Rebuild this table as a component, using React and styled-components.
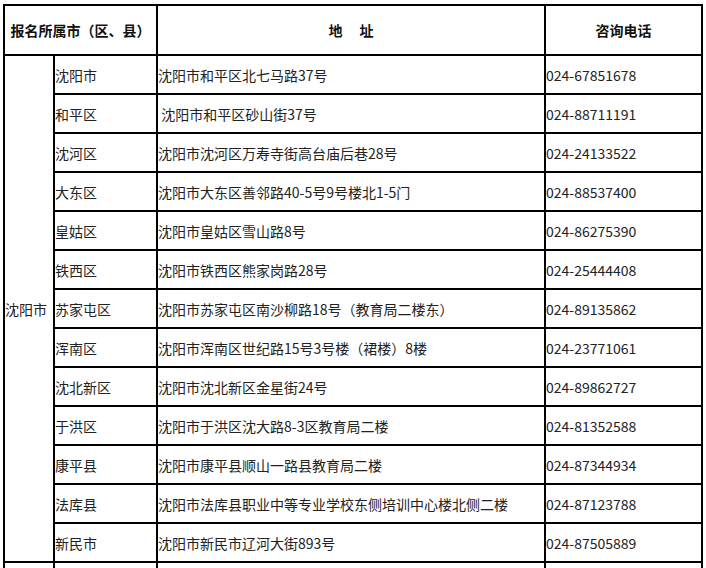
import React from 'react';
import styled, { createGlobalStyle } from 'styled-components';

const GlobalStyle = createGlobalStyle`
  html, body {
    margin: 0;
    padding: 0;
    background: #fff;
    overflow: hidden;
  }
  body {
    font-family: "Noto Sans CJK SC", "Noto Sans", sans-serif;
    color: #222;
  }
`;

const districts = [
  { name: '沈阳市', address: '沈阳市和平区北七马路37号', phone: '024-67851678' },
  { name: '和平区', address: '\u00a0沈阳市和平区砂山街37号', phone: '024-88711191' },
  { name: '沈河区', address: '沈阳市沈河区万寿寺街高台庙后巷28号', phone: '024-24133522' },
  { name: '大东区', address: '沈阳市大东区善邻路40-5号9号楼北1-5门', phone: '024-88537400' },
  { name: '皇姑区', address: '沈阳市皇姑区雪山路8号', phone: '024-86275390' },
  { name: '铁西区', address: '沈阳市铁西区熊家岗路28号', phone: '024-25444408' },
  { name: '苏家屯区', address: '沈阳市苏家屯区南沙柳路18号（教育局二楼东）', phone: '024-89135862' },
  { name: '浑南区', address: '沈阳市浑南区世纪路15号3号楼（裙楼）8楼', phone: '024-23771061' },
  { name: '沈北新区', address: '沈阳市沈北新区金星街24号', phone: '024-89862727' },
  { name: '于洪区', address: '沈阳市于洪区沈大路8-3区教育局二楼', phone: '024-81352588' },
  { name: '康平县', address: '沈阳市康平县顺山一路县教育局二楼', phone: '024-87344934' },
  { name: '法库县', address: '沈阳市法库县职业中等专业学校东侧培训中心楼北侧二楼', phone: '024-87123788' },
  { name: '新民市', address: '沈阳市新民市辽河大街893号', phone: '024-87505889' },
];

const Wrapper = styled.div`
  padding: 4px 0 0 3px;
`;

const Table = styled.table`
  border-collapse: collapse;
  table-layout: fixed;
  width: 698px;
  font-size: 14px;
  line-height: 18px;
  border: 2px solid #000;
`;

const HeadRow = styled.tr`
  height: 50px;
`;

const Row = styled.tr`
  height: 39px;
`;

const Th = styled.th`
  border: 2px solid #000;
  padding: 0;
  font-weight: bold;
  color: #111;
  text-align: center;
  white-space: pre;
`;

const Td = styled.td`
  border: 2px solid #000;
  padding: 0;
  text-align: left;
  vertical-align: middle;
  white-space: pre;
  color: #222;
`;

export default function App() {
  return (
    <>
      <GlobalStyle />
      <Wrapper>
        <Table>
          <colgroup>
            <col style={{ width: 50 }} />
            <col style={{ width: 103 }} />
            <col style={{ width: 388 }} />
            <col style={{ width: 157 }} />
          </colgroup>
          <thead>
            <HeadRow>
              <Th colSpan={2}>报名所属市（区、县）</Th>
              <Th>{'地\u3000\u00a0址'}</Th>
              <Th>咨询电话</Th>
            </HeadRow>
          </thead>
          <tbody>
            {districts.map((d, index) => (
              <Row key={d.name}>
                {index === 0 && <Td rowSpan={districts.length}>沈阳市</Td>}
                <Td>{d.name}</Td>
                <Td>{d.address}</Td>
                <Td>{d.phone}</Td>
              </Row>
            ))}
            <Row>
              <Td />
              <Td />
              <Td />
              <Td />
            </Row>
          </tbody>
        </Table>
      </Wrapper>
    </>
  );
}
